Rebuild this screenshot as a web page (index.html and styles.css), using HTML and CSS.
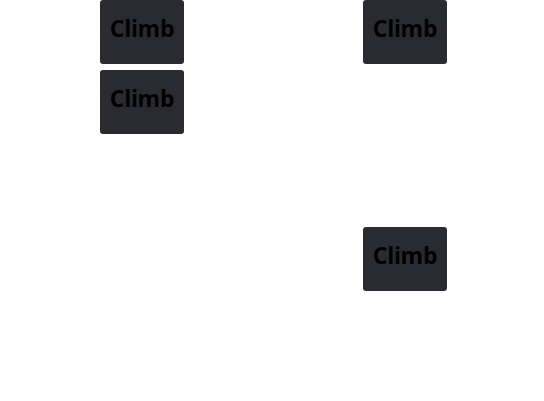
FILE: index.html
```html
<!DOCTYPE html>
<html lang="en">
<head>
    <meta charset="UTF-8">
    <title>Climb</title>
    <link rel="stylesheet" href="styles.css">
</head>
<body>

<div class="board">
    <div class="column left">
        <button class="climb">Climb</button>
        <button class="climb">Climb</button>
    </div>
    <div class="column right">
        <button class="climb">Climb</button>
        <button class="climb lower">Climb</button>
    </div>
</div>

</body>
</html>
```

FILE: styles.css
```css
body {
    margin: 0;
    background-color: #fff;
    font-family: "Open Sans", "Noto Sans", sans-serif;
}
.board {
    display: flex;
    width: 544px;
    height: 401px;
}
.column {
    display: flex;
    flex-direction: column;
    align-items: flex-start;
    gap: 6px;
}
.left {
    padding-left: 100px;
}
.right {
    padding-left: 179px;
}
.climb {
    width: 84px;
    height: 64px;
    padding: 0 0 8px 0;
    border: none;
    border-radius: 3px;
    background-color: #2a2b31;
    color: #000;
    font-family: "Open Sans", "Noto Sans", sans-serif;
    font-size: 23px;
    font-weight: bold;
    letter-spacing: -0.3px;
    cursor: pointer;
}
.climb.lower {
    margin-top: 157px;
}
```
